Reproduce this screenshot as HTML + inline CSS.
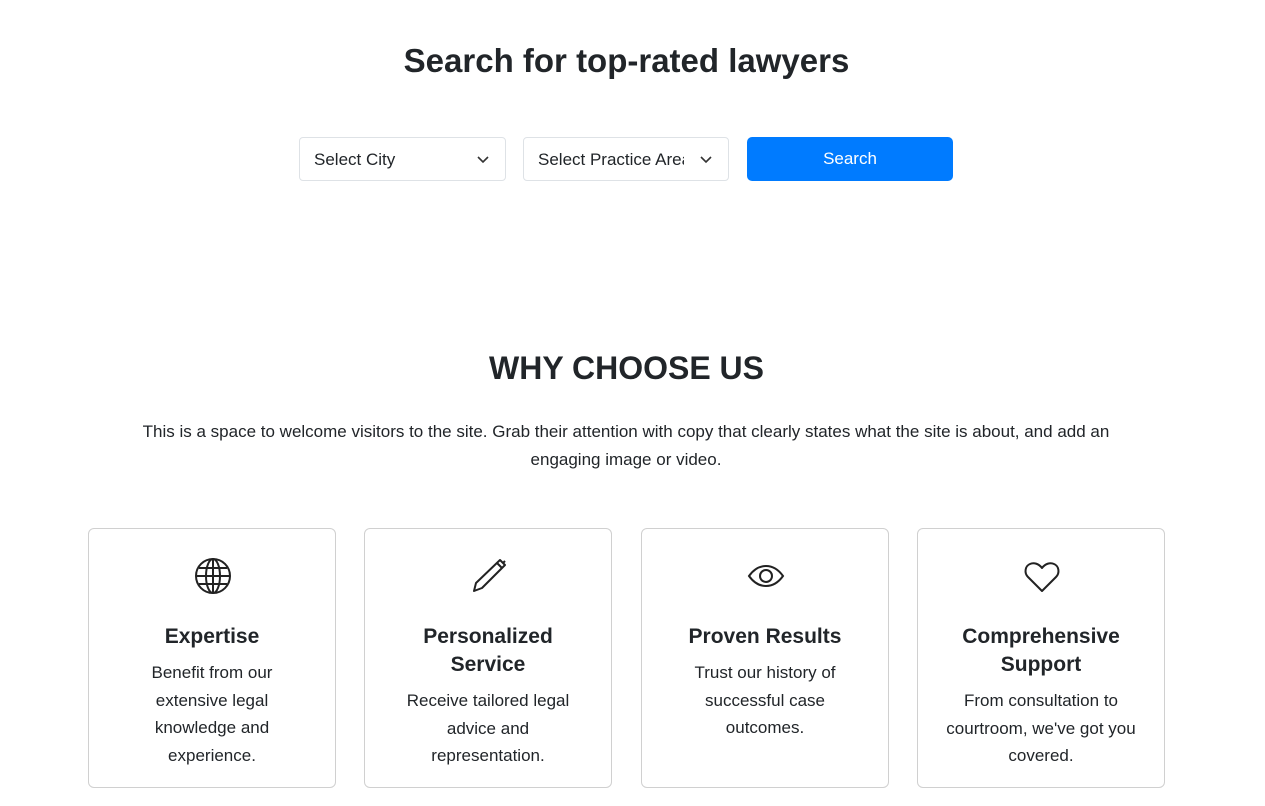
<!DOCTYPE html>
<html><head><meta charset="utf-8"><style>
body{margin:0;width:1265px;height:806px;background:#fff;font-family:"Liberation Sans","DejaVu Sans",sans-serif;color:#212529;position:relative;overflow:hidden}
.abs{position:absolute}
h1{position:absolute;left:0;width:1253px;text-align:center;margin:0;font-weight:700}
.sel{position:absolute;top:137px;height:44px;border:1px solid #dee2e6;border-radius:4px;font-size:17px;line-height:44px;padding-left:14px;box-sizing:border-box;overflow:hidden;white-space:nowrap;background:#fff}
.sel svg{position:absolute;right:16px;top:18px}
.sel span{display:block;overflow:hidden}
.btn{position:absolute;left:747px;top:137px;width:206px;height:44px;background:#007bff;border-radius:5px;color:#fff;font-size:17px;text-align:center;line-height:44px}
.card{position:absolute;top:528px;width:248px;height:260px;border:1px solid #d0d0d0;border-radius:6px;box-sizing:border-box;text-align:center}
.card svg{position:absolute;left:105px;top:28px}
.card h3{margin:0;position:absolute;top:94px;left:40px;right:40px;font-size:21px;font-weight:700;line-height:28px}
.card p{margin:0;position:absolute;left:18px;right:18px;font-size:17px;line-height:27.5px}
</style></head><body>
<h1 style="top:42px;font-size:33px">Search for top-rated lawyers</h1>
<div class="sel" style="left:299px;width:207px"><span>Select City</span><svg width="12" height="8" viewBox="0 0 12 8"><path d="M1 1l5 5 5-5" fill="none" stroke="#333" stroke-width="1.6"/></svg></div>
<div class="sel" style="left:523px;width:206px"><span style="width:146px">Select Practice Area</span><svg width="12" height="8" viewBox="0 0 12 8"><path d="M1 1l5 5 5-5" fill="none" stroke="#333" stroke-width="1.6"/></svg></div>
<div class="btn">Search</div>
<h1 style="top:350px;font-size:32px">WHY CHOOSE US</h1>
<div class="abs" style="top:418px;left:116px;width:1020px;text-align:center;font-size:17px;line-height:27.5px">This is a space to welcome visitors to the site. Grab their attention with copy that clearly states what the site is about, and add an engaging image or video.</div>

<div class="card" style="left:88px"><svg width="38" height="38" viewBox="0 0 38 38" fill="none" stroke="#222" stroke-width="2"><circle cx="19" cy="19" r="17"/><ellipse cx="19" cy="19" rx="7" ry="17"/><path d="M19 2v34M2 19h34M5 11h28M5 27h28"/></svg><h3>Expertise</h3><p style="top:130px;left:40px;right:40px">Benefit from our extensive legal knowledge and experience.</p></div>
<div class="card" style="left:364px"><svg width="38" height="38" viewBox="0 0 38 38" fill="none" stroke="#222" stroke-width="2" stroke-linejoin="round"><path d="M30 3l5 5L12 31l-8 3 2-8z"/><path d="M27 6l5 5"/><path d="M33 6l2-2"/></svg><h3>Personalized Service</h3><p style="top:158px;left:30px;right:30px">Receive tailored legal advice and representation.</p></div>
<div class="card" style="left:641px"><svg width="38" height="38" viewBox="0 0 38 38" fill="none" stroke="#222" stroke-width="2"><path d="M2 19c5-7 11-10 17-10s12 3 17 10c-5 7-11 10-17 10S7 26 2 19z"/><circle cx="19" cy="19" r="6"/></svg><h3>Proven Results</h3><p style="top:130px;left:40px;right:40px">Trust our history of successful case outcomes.</p></div>
<div class="card" style="left:917px"><svg width="38" height="38" viewBox="0 0 38 38" fill="none" stroke="#222" stroke-width="2" stroke-linejoin="round"><path d="M19 34L5 20C1 16 2 9 7 7c4-2 9 0 12 4 3-4 8-6 12-4 5 2 6 9 2 13z"/></svg><h3 style="left:20px;right:20px">Comprehensive Support</h3><p style="top:158px;left:8px;right:8px">From consultation to courtroom, we've got you covered.</p></div>
</body></html>
